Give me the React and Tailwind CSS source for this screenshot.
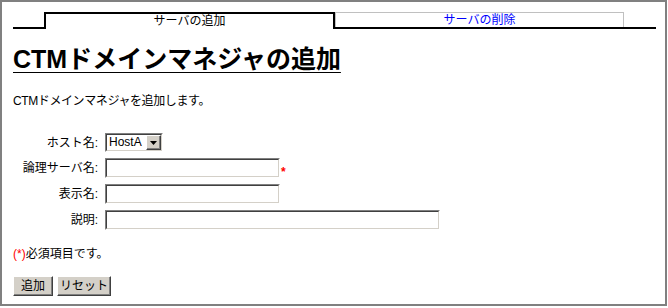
export default function App() {
  const font = "font-['Liberation_Sans','Noto_Sans_CJK_JP',sans-serif]";
  const inset =
    "border border-t-[#808080] border-l-[#808080] border-r-white border-b-white";
  const insetInner =
    "border border-t-[#404040] border-l-[#404040] border-r-[#d4d0c8] border-b-[#d4d0c8] bg-white";
  const raised =
    "bg-[#d4d0c8] border border-t-white border-l-white border-r-[#404040] border-b-[#404040] shadow-[inset_-1px_-1px_0_#808080]";
  return (
    <div className={`w-[668px] h-[308px] bg-white ${font} text-[12px] text-black`}>
      <div className="w-[667px] h-[306px] border-2 border-[#808080] pl-[11px]">
        {/* tabs */}
        <div className="flex mt-[10px] h-[17px]">
          <div className="w-[31px] border-b-2 border-black" />
          <div className="w-[291px] border-t-2 border-l-2 border-r-2 border-black text-center leading-[14px]">
            サーバの追加
          </div>
          <div className="w-[321px] border-b-2 border-black">
            <div className="w-[289px] h-[15px] border-t border-l border-r border-[#c0c0c0] text-[#0000ff] text-center leading-[14px]">
              サーバの削除
            </div>
          </div>
        </div>

        <h1 className="mt-[15px] text-[25px] leading-[30px] font-bold underline underline-offset-[4px] decoration-1 whitespace-nowrap">
          CTMドメインマネジャの追加
        </h1>

        <p className="mt-[19px] leading-[16px] tracking-[-0.4px]">
          CTMドメインマネジャを追加します。
        </p>

        <div className="mt-[24px] flex flex-col gap-[6px]">
          <div className="flex items-center h-[19px]">
            <div className="w-[85px] text-right">ホスト名:</div>
            <div className={`ml-[7px] w-[58px] h-[19px] ${inset}`}>
              <div className={`w-full h-full flex items-center ${insetInner}`}>
                <span className="flex-1 pl-[2px] leading-[15px]">HostA</span>
                <div className={`w-[15px] h-[15px] flex items-center justify-center ${raised}`}>
                  <svg width="7" height="4" viewBox="0 0 7 4">
                    <path d="M0 0H7L3.5 4Z" fill="#000" />
                  </svg>
                </div>
              </div>
            </div>
          </div>
          <div className="flex items-center h-[20px]">
            <div className="w-[85px] text-right">論理サーバ名:</div>
            <div className={`ml-[7px] w-[175px] h-[20px] ${inset}`}>
              <div className={`w-full h-full ${insetInner}`} />
            </div>
            <span className="ml-[1px] text-[#ff0000] font-bold translate-y-[4px]">*</span>
          </div>
          <div className="flex items-center h-[20px]">
            <div className="w-[85px] text-right">表示名:</div>
            <div className={`ml-[7px] w-[175px] h-[20px] ${inset}`}>
              <div className={`w-full h-full ${insetInner}`} />
            </div>
          </div>
          <div className="flex items-center h-[20px]">
            <div className="w-[85px] text-right">説明:</div>
            <div className={`ml-[7px] w-[335px] h-[20px] ${inset}`}>
              <div className={`w-full h-full ${insetInner}`} />
            </div>
          </div>
        </div>

        <p className="mt-[16px] leading-[16px]">
          <span className="text-[#ff0000]">(*)</span>必須項目です。
        </p>

        <div className="mt-[14px] flex gap-[4px]">
          <button className={`h-[20px] w-[40px] leading-[16px] ${raised}`}>追加</button>
          <button className={`h-[20px] w-[54px] leading-[16px] ${raised}`}>リセット</button>
        </div>
      </div>
    </div>
  );
}
